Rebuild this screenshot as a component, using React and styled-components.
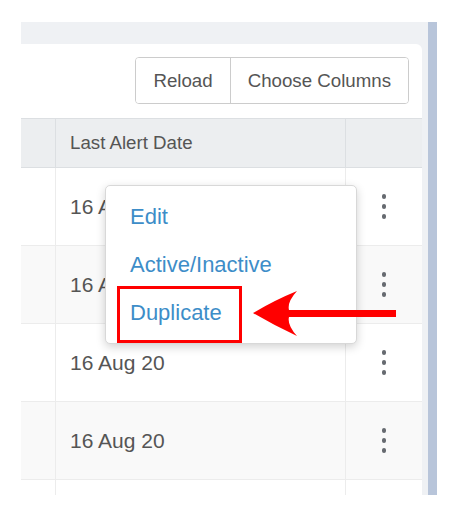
import React from "react";
import styled, { createGlobalStyle } from "styled-components";

const Global = createGlobalStyle`
  html, body { margin: 0; padding: 0; background: #ffffff; }
  body { font-family: "Liberation Sans", Arial, sans-serif; }
  * { box-sizing: border-box; }
`;

const Frame = styled.div`
  position: relative;
  margin: 22px 0 0 21px;
  width: 416px;
  height: 473px;
  overflow: hidden;
  display: flex;
`;

const Main = styled.div`
  flex: 1;
  background: #eff1f4;
  padding: 22px 6px 0 0;
  display: flex;
  flex-direction: column;
`;

const ScrollBar = styled.div`
  width: 9px;
  background: #b8c5da;
`;

const Card = styled.div`
  flex: 1;
  background: #ffffff;
  border-top-right-radius: 6px;
  padding-top: 13px;
  display: flex;
  flex-direction: column;
`;

const Toolbar = styled.div`
  display: flex;
  justify-content: flex-end;
  padding-right: 13px;
  margin-bottom: 14px;
`;

const ButtonGroup = styled.div`
  display: flex;
  height: 47px;
  border: 1px solid #cccccc;
  border-radius: 4px;
  overflow: hidden;
`;

const Button = styled.button`
  font-family: "Liberation Sans", Arial, sans-serif;
  font-size: 18.7px;
  color: #555555;
  background: #ffffff;
  border: none;
  border-left: ${(p) => (p.$first ? "none" : "1px solid #cccccc")};
  padding: 0 17px;
  height: 100%;
  cursor: pointer;
`;

const Row = styled.div`
  display: grid;
  grid-template-columns: 34px 290px 77px;
  height: ${(p) => (p.$head ? "50px" : "78px")};
  background: ${(p) => (p.$head ? "#eceef0" : p.$striped ? "#f9f9f9" : "#ffffff")};
  border-top: ${(p) => (p.$head ? "1px solid #dcdfe2" : "none")};
  border-bottom: 1px solid ${(p) => (p.$head ? "#dcdfe2" : "#ececec")};
  flex-shrink: 0;
`;

const Cell = styled.div`
  display: flex;
  align-items: center;
  justify-content: ${(p) => (p.$center ? "center" : "flex-start")};
  padding-left: ${(p) => (p.$center ? "0" : "14px")};
  border-left: ${(p) => (p.$first ? "none" : `1px solid ${p.$head ? "#dcdfe2" : "#ececec"}`)};
  font-size: ${(p) => (p.$head ? "18.7px" : "21px")};
  color: #555555;
  white-space: nowrap;
  overflow: hidden;
`;

const Kebab = styled.div`
  display: flex;
  flex-direction: column;
  gap: 5.5px;
  span {
    display: block;
    width: 4.5px;
    height: 4.5px;
    border-radius: 50%;
    background: #666a70;
  }
`;

const Menu = styled.div`
  position: absolute;
  left: 84px;
  top: 163px;
  width: 252px;
  height: 159px;
  background: #ffffff;
  border: 1px solid #d8d8d8;
  border-radius: 5px;
  box-shadow: 0 3px 10px rgba(0, 0, 0, 0.18);
  padding-top: 7px;
`;

const MenuItem = styled.div`
  height: 48px;
  line-height: 48px;
  padding: 0 24px;
  font-size: 22px;
  color: #3d8dc8;
  white-space: nowrap;
`;

const Highlight = styled.div`
  position: absolute;
  left: 11px;
  top: 100px;
  width: 125px;
  height: 57px;
  border: 3px solid #ff0000;
`;

const Arrow = styled.svg`
  position: absolute;
  left: 231px;
  top: 268px;
  width: 146px;
  height: 48px;
`;

const Dots = () => (
  <Kebab>
    <span />
    <span />
    <span />
  </Kebab>
);

const rows = [false, true, false, true, false];

export default function App() {
  return (
    <>
      <Global />
      <Frame>
        <Main>
          <Card>
            <Toolbar>
              <ButtonGroup>
                <Button $first>Reload</Button>
                <Button>Choose Columns</Button>
              </ButtonGroup>
            </Toolbar>
            <Row $head>
              <Cell $head $first />
              <Cell $head>Last Alert Date</Cell>
              <Cell $head />
            </Row>
            {rows.map((striped, i) => (
              <Row key={i} $striped={striped}>
                <Cell $first />
                <Cell>16 Aug 20</Cell>
                <Cell $center>
                  <Dots />
                </Cell>
              </Row>
            ))}
          </Card>
        </Main>
        <ScrollBar />
        <Menu>
          <MenuItem>Edit</MenuItem>
          <MenuItem>Active/Inactive</MenuItem>
          <MenuItem>Duplicate</MenuItem>
          <Highlight />
        </Menu>
        <Arrow viewBox="252 290 146 48">
          <path
            d="M253,313 Q275,300 297,291 Q287,302 289,310 L396,310 L396,317 L289,317 Q287,325 297,336 Q275,326 253,313 Z"
            fill="#ff0000"
          />
        </Arrow>
      </Frame>
    </>
  );
}
